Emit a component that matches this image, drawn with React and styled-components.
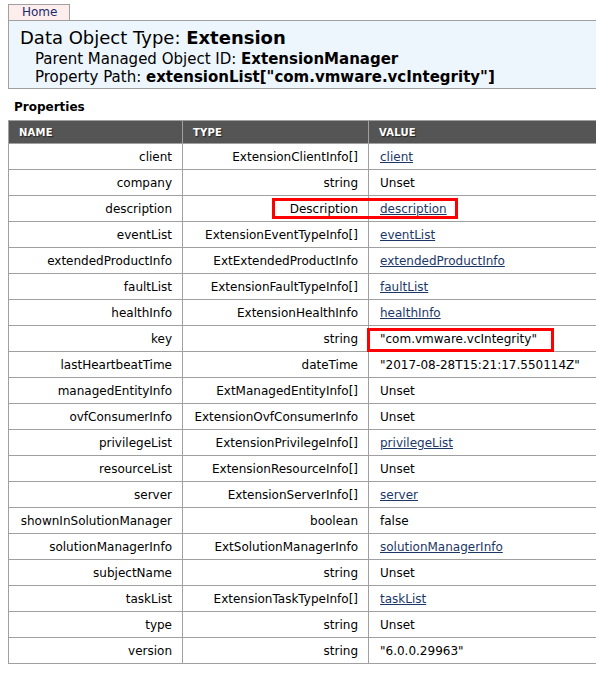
import { createGlobalStyle, styled } from 'styled-components';

const GlobalStyle = createGlobalStyle`
  html, body {
    margin: 0;
    padding: 0;
    overflow: hidden;
    background: #fff;
  }
  body {
    font-family: "DejaVu Sans", Verdana, sans-serif;
    color: #000;
  }
`;

const Page = styled.div`
  padding: 4px 0 0 8px;
  width: 640px;
`;

const HomeTab = styled.a`
  display: block;
  box-sizing: border-box;
  width: 62px;
  height: 16px;
  line-height: 15px;
  padding-left: 13px;
  font-size: 12px;
  color: #1a2a6c;
  background: #fdeeed;
  border: 1px solid #a0a0a0;
  border-bottom: none;
  text-decoration: none;
`;

const Header = styled.div`
  box-sizing: border-box;
  height: 69px;
  background: #eef6fd;
  border: 1px solid #a0a0a0;
  padding: 5px 0 0 11px;
`;

const Title = styled.h1`
  margin: 0;
  font-size: 18px;
  font-weight: normal;
  line-height: 24px;

  b {
    font-weight: bold;
  }
`;

const SubLine = styled.div`
  padding-left: 15px;
  font-size: 15px;
  line-height: 18px;
`;

const SectionTitle = styled.h2`
  margin: 0;
  padding: 8px 0 0 6px;
  height: 23px;
  font-size: 12px;
  font-weight: bold;
  line-height: 20px;
`;

const TableWrap = styled.div`
  position: relative;
`;

const Table = styled.table`
  border-collapse: collapse;
  width: 640px;
  font-size: 12px;
  table-layout: fixed;

  th,
  td {
    border: 1px solid #a0a0a0;
    padding: 0 10px;
  }
`;

const HeadCell = styled.th`
  height: 22px;
  background: #555;
  color: #fff;
  text-align: left;
  font-size: 10px;
  font-weight: bold;
  text-shadow: 1px 1px 1px #222;
  letter-spacing: 0.2px;
`;

const Cell = styled.td`
  height: 25px;
  text-align: ${(p) => (p.$left ? 'left' : 'right')};
  white-space: nowrap;
  ${(p) => (p.$left ? 'padding-left: 11px !important;' : '')}
`;

const ValueLink = styled.a`
  color: #1c3766;
  text-decoration: underline;
`;

const Highlight = styled.div`
  position: absolute;
  box-sizing: border-box;
  border: 3px solid #f00;
  pointer-events: none;
`;

const rows = [
  ['client', 'ExtensionClientInfo[]', 'client', true],
  ['company', 'string', 'Unset'],
  ['description', 'Description', 'description', true],
  ['eventList', 'ExtensionEventTypeInfo[]', 'eventList', true],
  ['extendedProductInfo', 'ExtExtendedProductInfo', 'extendedProductInfo', true],
  ['faultList', 'ExtensionFaultTypeInfo[]', 'faultList', true],
  ['healthInfo', 'ExtensionHealthInfo', 'healthInfo', true],
  ['key', 'string', '"com.vmware.vcIntegrity"'],
  ['lastHeartbeatTime', 'dateTime', '"2017-08-28T15:21:17.550114Z"'],
  ['managedEntityInfo', 'ExtManagedEntityInfo[]', 'Unset'],
  ['ovfConsumerInfo', 'ExtensionOvfConsumerInfo', 'Unset'],
  ['privilegeList', 'ExtensionPrivilegeInfo[]', 'privilegeList', true],
  ['resourceList', 'ExtensionResourceInfo[]', 'Unset'],
  ['server', 'ExtensionServerInfo[]', 'server', true],
  ['shownInSolutionManager', 'boolean', 'false'],
  ['solutionManagerInfo', 'ExtSolutionManagerInfo', 'solutionManagerInfo', true],
  ['subjectName', 'string', 'Unset'],
  ['taskList', 'ExtensionTaskTypeInfo[]', 'taskList', true],
  ['type', 'string', 'Unset'],
  ['version', 'string', '"6.0.0.29963"'],
];

const App = () => {
  return (
    <Page>
      <GlobalStyle />
      <HomeTab href="#">Home</HomeTab>
      <Header>
        <Title>
          Data Object Type: <b>Extension</b>
        </Title>
        <SubLine>
          Parent Managed Object ID: <b>ExtensionManager</b>
        </SubLine>
        <SubLine>
          Property Path: <b>extensionList["com.vmware.vcIntegrity"]</b>
        </SubLine>
      </Header>
      <SectionTitle>Properties</SectionTitle>
      <TableWrap>
        <Table>
          <colgroup>
            <col style={{ width: 174 }} />
            <col style={{ width: 186 }} />
            <col />
          </colgroup>
          <thead>
            <tr>
              <HeadCell>NAME</HeadCell>
              <HeadCell>TYPE</HeadCell>
              <HeadCell>VALUE</HeadCell>
            </tr>
          </thead>
          <tbody>
            {rows.map(([name, type, value, link]) => (
              <tr key={name}>
                <Cell>{name}</Cell>
                <Cell>{type}</Cell>
                <Cell $left>
                  {link ? <ValueLink href="#">{value}</ValueLink> : value}
                </Cell>
              </tr>
            ))}
          </tbody>
        </Table>
        <Highlight style={{ left: 264, top: 78, width: 186, height: 21 }} />
        <Highlight style={{ left: 359, top: 208, width: 187, height: 24 }} />
      </TableWrap>
    </Page>
  );
};

export default App;
